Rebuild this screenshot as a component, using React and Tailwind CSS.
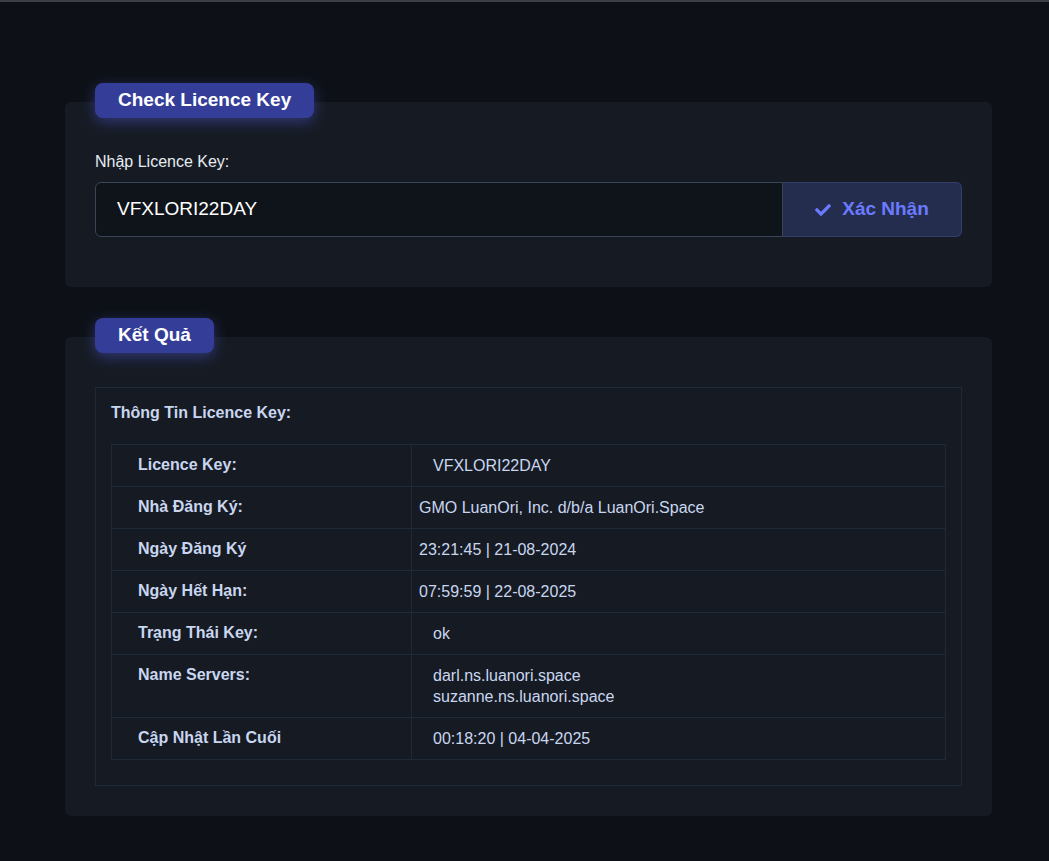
import { FaCheck } from 'react-icons/fa';

const rows = [
  ['Licence Key:', ['VFXLORI22DAY'], 'pl-[21px]'],
  ['Nhà Đăng Ký:', ['GMO LuanOri, Inc. d/b/a LuanOri.Space'], 'pl-[7px]'],
  ['Ngày Đăng Ký', ['23:21:45 | 21-08-2024'], 'pl-[7px]'],
  ['Ngày Hết Hạn:', ['07:59:59 | 22-08-2025'], 'pl-[7px]'],
  ['Trạng Thái Key:', ['ok'], 'pl-[21px]'],
  ['Name Servers:', ['darl.ns.luanori.space', 'suzanne.ns.luanori.space'], 'pl-[21px]'],
  ['Cập Nhật Lần Cuối', ['00:18:20 | 04-04-2025'], 'pl-[21px]'],
];

const Badge = ({ children }) => (
  <div className="absolute -top-[19px] left-[30px] bg-[#343e98] text-white font-bold text-[19px] rounded-lg px-[23px] h-[35px] flex items-center shadow-[0_4px_14px_rgba(80,90,220,0.45)]">
    {children}
  </div>
);

const App = () => {
  return (
    <div className="min-h-[861px] bg-[#0d1117] border-t-2 border-[#3a3f47] pt-[100px] px-[65px] pb-10 font-[family-name:Liberation_Sans,Arial,sans-serif]">
      <div className="relative w-[927px] bg-[#161b23] rounded-md pt-[49px] pb-[50px] px-[30px]">
        <Badge>Check Licence Key</Badge>
        <div className="text-[#e6edf3] text-[16px] leading-[21px] mb-[10px]">Nhập Licence Key:</div>
        <div className="flex h-[55px]">
          <div className="flex-1 border border-[#3a4556] rounded-l-md bg-[#0f141b] flex items-center pl-[21px] text-white text-[19px]">
            VFXLORI22DAY
          </div>
          <button className="w-[179px] bg-[#252d4f] border border-[#343e6e] border-l-0 rounded-r-md flex items-center justify-center gap-[11px] text-[#6b7bff] font-bold text-[19px]">
            <FaCheck className="text-[16px]" />
            Xác Nhận
          </button>
        </div>
      </div>

      <div className="relative w-[927px] mt-[50px] bg-[#161b23] rounded-md pt-[50px] pb-[30px] px-[30px]">
        <Badge>Kết Quả</Badge>
        <div className="border border-[#1f2a38] pt-[15px] px-[15px] pb-[25px]">
          <div className="text-[#c9d6f0] font-bold text-[16px] leading-[20px] mb-[21px]">Thông Tin Licence Key:</div>
          <div className="border border-[#1f2a38]">
            {rows.map(([k, v, pad], i) => (
              <div key={i} className={`grid grid-cols-[300px_1fr] ${i ? 'border-t border-[#1f2a38]' : ''}`}>
                <div className="pl-[26px] pt-[9px] pb-[11px] text-[#c9d6f0] font-bold text-[16px] leading-[21px] border-r border-[#1f2a38]">{k}</div>
                <div className={`${pad} pt-[10px] pb-[10px] text-[#c9d6f0] text-[16px] leading-[21px]`}>
                  {v.map((line) => (
                    <div key={line}>{line}</div>
                  ))}
                </div>
              </div>
            ))}
          </div>
        </div>
      </div>
    </div>
  );
};

export default App;
